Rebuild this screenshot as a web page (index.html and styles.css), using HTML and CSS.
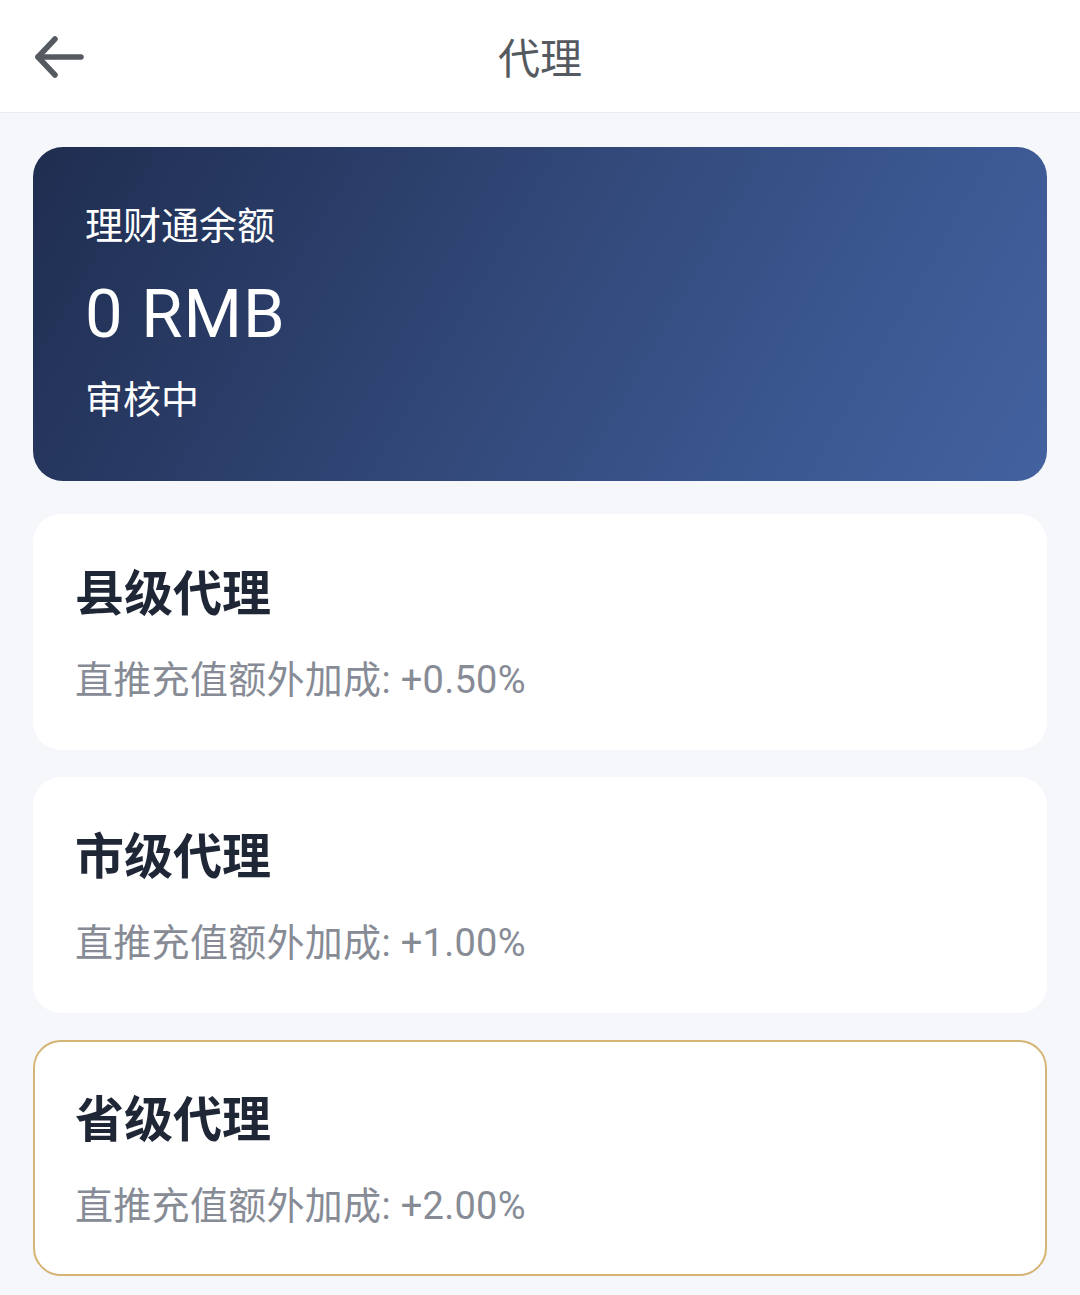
FILE: index.html
```html
<!DOCTYPE html>
<html lang="zh-CN">
<head>
<meta charset="utf-8">
<title>代理</title>
<link rel="stylesheet" href="styles.css">
</head>
<body>
<header class="topbar">
  <button class="back" aria-label="返回">
    <svg width="56" height="50" viewBox="0 0 56 50" fill="none" stroke="#555a60" stroke-width="5.5" stroke-linecap="round" stroke-linejoin="round">
      <path d="M7 25 H50"/>
      <path d="M24 7 L7 25 L24 43"/>
    </svg>
  </button>
  <h1 class="title">代理</h1>
</header>
<main class="content">
  <section class="balance">
    <div class="balance-label">理财通余额</div>
    <div class="balance-amount">0 RMB</div>
    <div class="balance-status">审核中</div>
  </section>
  <section class="tier">
    <div class="tier-name">县级代理</div>
    <div class="tier-desc">直推充值额外加成: +0.50%</div>
  </section>
  <section class="tier">
    <div class="tier-name">市级代理</div>
    <div class="tier-desc">直推充值额外加成: +1.00%</div>
  </section>
  <section class="tier tier-active">
    <div class="tier-name">省级代理</div>
    <div class="tier-desc">直推充值额外加成: +2.00%</div>
  </section>
</main>
</body>
</html>
```
FILE: styles.css
```css
* { box-sizing: border-box; }
html, body { margin: 0; padding: 0; }
body {
  background: #f5f7fa;
  font-family: Roboto, "Noto Sans CJK SC", "Noto Sans", sans-serif;
  width: 1080px;
  min-height: 1295px;
}
.topbar {
  height: 113px;
  background: #ffffff;
  border-bottom: 1px solid #e9ebef;
  display: flex;
  align-items: center;
  justify-content: center;
  position: relative;
}
.back {
  position: absolute;
  left: 31px;
  top: 32px;
  width: 56px;
  height: 50px;
  padding: 0;
  border: 0;
  background: none;
  display: flex;
}
.title {
  margin: 0;
  font-family: "Noto Sans CJK SC", sans-serif;
  font-weight: 400;
  font-size: 42px;
  line-height: 60px;
  color: #555a60;
}
.content {
  padding: 34px 33px 20px;
  display: flex;
  flex-direction: column;
}
.balance {
  height: 334px;
  border-radius: 30px;
  background: linear-gradient(120deg, #1f2d50 0%, #2f4472 40%, #3b5790 75%, #4461a0 100%);
  padding: 51px 52px 0;
  color: #ffffff;
  display: flex;
  flex-direction: column;
}
.balance-label {
  font-family: "Noto Sans CJK SC", sans-serif;
  font-size: 38px;
  line-height: 50px;
}
.balance-amount {
  margin-top: 26px;
  font-family: Roboto, sans-serif;
  font-size: 67px;
  line-height: 80px;
  letter-spacing: 1px;
}
.balance-status {
  margin-top: 18px;
  font-family: "Noto Sans CJK SC", sans-serif;
  font-size: 38px;
  line-height: 50px;
}
.tier {
  margin-top: 27px;
  height: 236px;
  background: #ffffff;
  border-radius: 28px;
  padding: 44px 40px 0;
  border: 2px solid transparent;
}
.balance + .tier { margin-top: 33px; }
.tier-active {
  border-color: #d5b474;
}
.tier-name {
  font-family: "Noto Sans CJK SC", sans-serif;
  font-weight: 700;
  font-size: 49px;
  line-height: 60px;
  color: #1f2636;
}
.tier-desc {
  margin-top: 35px;
  font-size: 38px;
  line-height: 50px;
  color: #868b95;
  letter-spacing: 0.3px;
}
```
